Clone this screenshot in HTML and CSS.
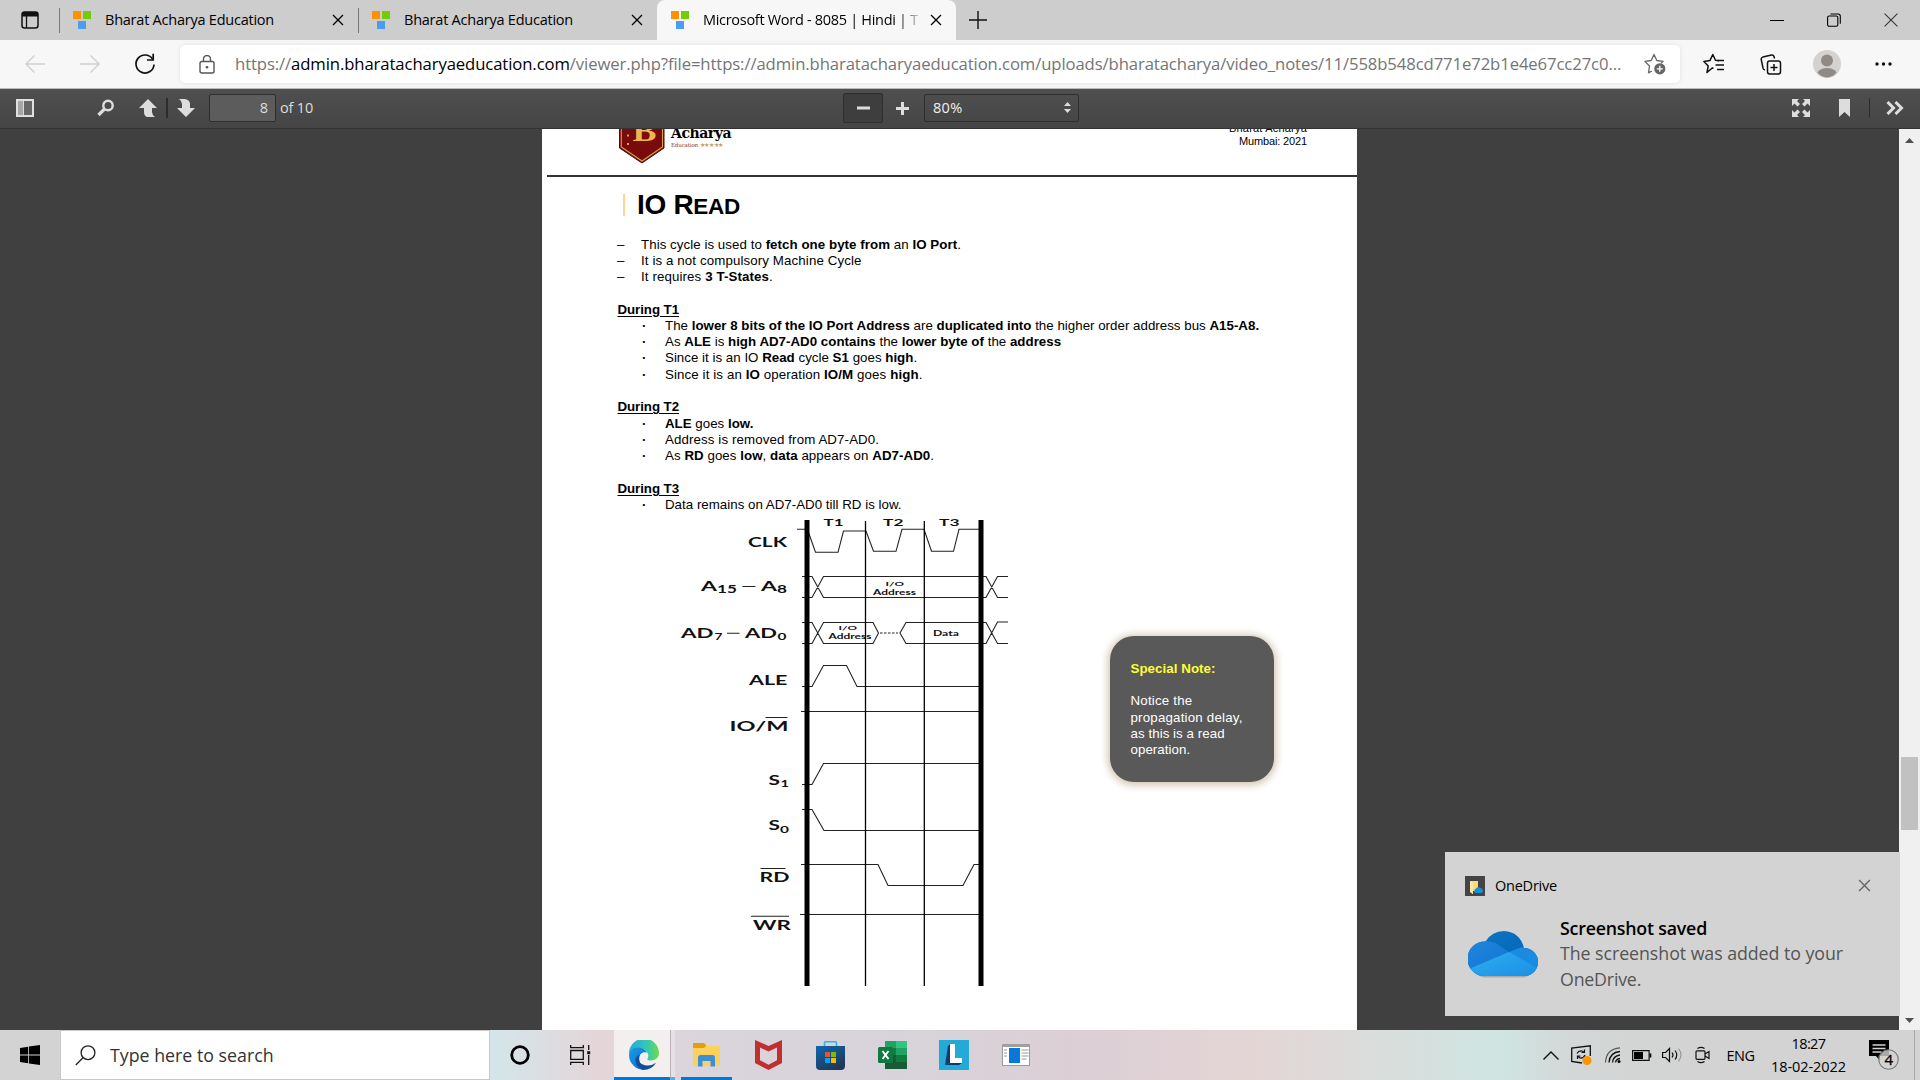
FILE: index.html
```html
<!DOCTYPE html>
<html lang="en">
<head>
<meta charset="utf-8">
<title>Microsoft Word - 8085 | Hindi</title>
<link rel="stylesheet" href="styles.css">
</head>
<body>
<svg class="defs" width="0" height="0">
  <symbol id="favicon" viewBox="0 0 18 18"><path fill="#ff9000" d="M0 0h8v8H0z"/><path fill="#72cc0a" d="M10 0h8v8h-8z"/><path fill="#4a9cf5" d="M5 10h8v8H5z"/></symbol>
  <symbol id="x" viewBox="0 0 12 12"><path d="M1 1l10 10M11 1L1 11" fill="none" stroke="currentColor" stroke-width="1.3"/></symbol>
</svg>

<header class="tabs">
  <div class="workspace"><svg width="18" height="18" viewBox="0 0 18 18"><rect x="1" y="1" width="16" height="16" rx="2.5" fill="none" stroke="#111" stroke-width="1.5"/><path d="M1 2.500Q1 1 3 1h12q2 0 2 1.500V5.500H1z" fill="#111"/><path d="M5.500 5v12" stroke="#111" stroke-width="1.300"/></svg></div>
  <div class="tab"><svg class="fav"><use href="#favicon"/></svg><span class="title">Bharat Acharya Education</span><svg class="close"><use href="#x"/></svg></div>
  <div class="tab"><svg class="fav"><use href="#favicon"/></svg><span class="title">Bharat Acharya Education</span><svg class="close"><use href="#x"/></svg></div>
  <div class="tab active"><svg class="fav"><use href="#favicon"/></svg><span class="title fade">Microsoft Word - 8085 | Hindi | T</span><svg class="close"><use href="#x"/></svg></div>
  <svg class="plus" width="18" height="18" viewBox="0 0 18 18"><path d="M9 0v18M0 9h18" stroke="#111" stroke-width="1.400"/></svg>
  <div class="winbtns">
    <span><svg width="14" height="14"><path d="M0 7.500h14" stroke="#000"/></svg></span>
    <span><svg width="14" height="14" viewBox="0 0 14 14"><rect x=".6" y="3" width="10.200" height="10.200" rx="1.500" fill="none" stroke="#000" stroke-width="1.100"/><path d="M3.500 1h7.500q2.300 0 2.300 2.300v7.500" fill="none" stroke="#000" stroke-width="1.100"/></svg></span>
    <span><svg width="14" height="14" viewBox="0 0 12 12"><path d="M.5.5l11 11M11.500.5l-11 11" stroke="#333" stroke-width=".9"/></svg></span>
  </div>
</header>

<nav class="nav">
  <div class="navbtn"><svg width="20" height="18" viewBox="0 0 20 18"><path d="M20 9H1M9.500.5L1 9l8.500 8.500" fill="none" stroke="#cfcfcf" stroke-width="1.400"/></svg></div>
  <div class="navbtn"><svg width="20" height="18" viewBox="0 0 20 18"><path d="M0 9h19M10.500.5L19 9l-8.500 8.500" fill="none" stroke="#cfcfcf" stroke-width="1.400"/></svg></div>
  <div class="navbtn"><svg width="22" height="22" viewBox="0 0 22 22"><path d="M18.500 6A9 9 0 1 0 20 11.500" fill="none" stroke="#111" stroke-width="1.700"/><path d="M19.200.8V7h-6.200" fill="none" stroke="#111" stroke-width="1.700"/></svg></div>
  <div class="field">
    <svg width="16" height="19" viewBox="0 0 16 19"><rect x="1" y="6.500" width="14" height="11.500" rx="1.800" fill="none" stroke="#555" stroke-width="1.400"/><path d="M4.500 6.500V4a3.500 3.500 0 0 1 7 0v2.500" fill="none" stroke="#555" stroke-width="1.400"/><circle cx="8" cy="12.200" r="1.300" fill="#555"/></svg>
    <span class="url">https://<b>admin.bharatacharyaeducation.com</b>/viewer.php?file=https://admin.bharatacharyaeducation.com/uploads/bharatacharya/video_notes/11/558b548cd771e72b1e4e67cc27c0...</span>
    <svg class="star" width="22" height="22" viewBox="0 0 22 22"><path d="M8 18l-3.500 1.800L5.500 13 .9 8.400l6.300-.9L10 1.500l2.800 6 6.300.9-2 2" fill="none" stroke="#666" stroke-width="1.300" stroke-linejoin="round"/><circle cx="15.800" cy="15.800" r="5.600" fill="#666"/><path d="M15.800 12.800v6M12.800 15.800h6" stroke="#fff" stroke-width="1.300"/></svg>
  </div>
  <div class="navright">
    <span><svg width="22" height="22" viewBox="0 0 22 22"><path d="M10.500 15.200L9.200 15 4 19.500 5.200 13 .9 8.500l6-.9L9.800 1.500l2.700 5.700 3.500.5" fill="none" stroke="#111" stroke-width="1.500" stroke-linejoin="round"/><path d="M14.500 7.500h6.500M12.500 12h8.500M14 16.500h7" stroke="#111" stroke-width="1.500"/></svg></span>
    <span><svg width="22" height="21" viewBox="0 0 22 21"><rect x="7.500" y="7" width="13" height="13" rx="2.200" fill="none" stroke="#111" stroke-width="1.500"/><path d="M14 10v7M10.500 13.500h7M5 15.800Q3.300 16 3 14L1.200 5.500Q1 3.600 2.800 3.100L11.500 1q2-.3 2.500 1.500l.5 2" fill="none" stroke="#111" stroke-width="1.500"/></svg></span>
    <span><svg width="28" height="28" viewBox="0 0 28 28"><circle cx="14" cy="14" r="14" fill="#d4d2d0"/><circle cx="14" cy="10.500" r="6" fill="#8f8a86"/><path d="M4.500 22.500Q7 18 14 18t9.500 4.500A13 13 0 0 1 14 27.500a13 13 0 0 1-9.500-5z" fill="#8f8a86"/></svg></span>
    <span><svg width="17" height="4"><g fill="#111"><circle cx="2" cy="2" r="1.700"/><circle cx="8.500" cy="2" r="1.700"/><circle cx="15" cy="2" r="1.700"/></g></svg></span>
  </div>
</nav>

<div class="pdfbar">
  <div class="left">
    <svg width="18" height="18" viewBox="0 0 18 18"><rect x="1" y="1" width="16" height="16" fill="#666" stroke="#e0e0e0" stroke-width="2"/><path d="M2 2h4v14H2z" fill="#a5a5a5"/><path d="M7.200 2v14" stroke="#e0e0e0" stroke-width="1.500"/></svg>
    <svg class="m-search" width="18" height="18" viewBox="0 0 18 18"><circle cx="11" cy="6.500" r="4.700" fill="none" stroke="#ddd" stroke-width="2.400"/><path d="M7.500 10L1.500 16" stroke="#ddd" stroke-width="3.200"/></svg>
    <svg class="m-up" width="18" height="18" viewBox="0 0 18 18"><path d="M9 0l9 9h-5v4q0 3 3 5H8q-3-1-3-5V9H0z" fill="#ddd"/></svg>
    <i class="sep"></i>
    <svg class="m-down" width="18" height="18" viewBox="0 0 18 18"><path d="M2 0h6q5 1 5 5v4h5l-9 9-9-9h5V5Q5 2 2 0z" fill="#ddd"/></svg>
    <div class="pageno">8</div>
    <span class="of">of 10</span>
  </div>
  <div class="mid">
    <div class="minus"><svg width="13" height="4"><path d="M0 2h13" stroke="#ddd" stroke-width="3"/></svg></div>
    <svg class="zin" width="13" height="13"><path d="M0 6.500h13M6.500 0v13" stroke="#ddd" stroke-width="3"/></svg>
    <div class="select"><span>80%</span><svg width="7" height="11" viewBox="0 0 7 11"><path d="M0 4l3.500-4L7 4zM0 7l3.500 4L7 7z" fill="#ddd"/></svg></div>
  </div>
  <div class="right">
    <svg width="18" height="18" viewBox="0 0 18 18" fill="#ddd"><path d="M0 0h7L5 2l3 3-2.500 2.500-3-3L0 7zM18 0h-7l2 2-3 3 2.500 2.500 3-3L18 7zM0 18h7l-2-2 3-3-2.500-2.500-3 3L0 11zM18 18h-7l2-2-3-3 2.500-2.500 3 3L18 11z"/></svg>
    <svg width="11" height="18" viewBox="0 0 11 18"><path d="M0 0h11v18l-5.500-5L0 18z" fill="#ddd"/></svg>
    <i class="sep"></i>
    <svg width="18" height="14" viewBox="0 0 18 14"><path d="M1.500 1l6 6-6 6M9.500 1l6 6-6 6" fill="none" stroke="#ddd" stroke-width="3"/></svg>
  </div>
</div>

<main class="viewer">
  <article class="page">
    <div class="dochead">
      <svg class="shield" width="46" height="35" viewBox="0 0 46 35"><path d="M.5-4v23L23 34l22-15V-4z" fill="#7a0b0b" stroke="#4a0d08"/><path d="M2.300-4v22L23 32l20.500-14V-4z" fill="none" stroke="#d9a050" stroke-width="1.100"/><text x="13.500" y="12" font-family="Liberation Serif" font-weight="bold" font-size="30" textLength="24" lengthAdjust="spacingAndGlyphs" fill="#f0b64e">B</text><path d="M8 5.500h2v2H8zM8 14h2v2H8z" fill="#d9a050"/></svg>
      <div class="brand"><span class="acharya">Acharya</span><span class="edu">Education <em>★★★★★</em></span></div>
      <div class="author"><span class="a1">Bharat Acharya</span><br><span>Mumbai: 2021</span></div>
    </div>
    <h1>IO R<small>EAD</small></h1>
    <ul class="dash">
      <li class="w1">This cycle is used to <b>fetch one byte from</b> an <b>IO Port</b>.</li>
      <li class="w2">It is a not compulsory Machine Cycle</li>
      <li class="w2">It requires <b>3 T-States</b>.</li>
    </ul>
    <h2>During T1</h2>
    <ul class="dots">
      <li>The <b>lower 8 bits of the IO Port Address</b> are <b>duplicated into</b> the higher order address bus <b>A15-A8.</b></li>
      <li>As <b>ALE</b> is <b>high AD7-AD0 contains</b> the <b>lower byte of</b> the <b>address</b></li>
      <li>Since it is an IO <b>Read</b> cycle <b>S1</b> goes <b>high</b>.</li>
      <li class="w2">Since it is an <b>IO</b> operation <b>IO/M</b> goes <b>high</b>.</li>
    </ul>
    <h2>During T2</h2>
    <ul class="dots">
      <li><b>ALE</b> goes <b>low.</b></li>
      <li class="w2">Address is removed from AD7-AD0.</li>
      <li class="w1">As <b>RD</b> goes <b>low</b>, <b>data</b> appears on <b>AD7-AD0</b>.</li>
    </ul>
    <h2>During T3</h2>
    <ul class="dots">
      <li>Data remains on AD7-AD0 till RD is low.</li>
    </ul>
    <div class="figure">
      <svg class="timing" width="360" height="475" viewBox="660 515 360 475">
        <g class="lbl">
          <text x="823.500" y="526" font-size="10" textLength="20" lengthAdjust="spacingAndGlyphs">T1</text>
          <text x="883" y="526" font-size="10" textLength="20.500" lengthAdjust="spacingAndGlyphs">T2</text>
          <text x="939" y="526" font-size="10" textLength="20.500" lengthAdjust="spacingAndGlyphs">T3</text>
          <text x="748" y="546.700" textLength="39" lengthAdjust="spacingAndGlyphs">CLK</text>
          <text x="701" y="591.300" textLength="16" lengthAdjust="spacingAndGlyphs">A</text><text x="717" y="592.500" font-size="10.500" textLength="20" lengthAdjust="spacingAndGlyphs">15</text>
          <text x="761" y="591.300" textLength="16" lengthAdjust="spacingAndGlyphs">A</text><text x="777" y="592.500" font-size="10.500" textLength="10" lengthAdjust="spacingAndGlyphs">8</text>
          <text x="681" y="637.500" textLength="32.500" lengthAdjust="spacingAndGlyphs">AD</text><text x="714.500" y="639.500" font-size="9" textLength="8" lengthAdjust="spacingAndGlyphs">7</text>
          <text x="745" y="637.500" textLength="32" lengthAdjust="spacingAndGlyphs">AD</text><text x="777.500" y="639.500" font-size="9" textLength="9" lengthAdjust="spacingAndGlyphs">0</text>
          <text x="749" y="685" textLength="38.500" lengthAdjust="spacingAndGlyphs">ALE</text>
          <text x="729.500" y="730.500" textLength="59" lengthAdjust="spacingAndGlyphs">IO/M</text>
          <text x="768.500" y="784.700" textLength="11.500" lengthAdjust="spacingAndGlyphs">S</text><text x="780.500" y="787" font-size="9" textLength="8.500" lengthAdjust="spacingAndGlyphs">1</text>
          <text x="768.500" y="830.200" textLength="11.500" lengthAdjust="spacingAndGlyphs">S</text><text x="780" y="832.500" font-size="9" textLength="9" lengthAdjust="spacingAndGlyphs">0</text>
          <text x="759.500" y="881.700" textLength="30" lengthAdjust="spacingAndGlyphs">RD</text>
          <text x="753" y="929.500" textLength="38" lengthAdjust="spacingAndGlyphs">WR</text>
          <text x="885.500" y="586" font-size="6.300" textLength="18.500" lengthAdjust="spacingAndGlyphs">I/O</text>
          <text x="873" y="594.700" font-size="6.600" textLength="43" lengthAdjust="spacingAndGlyphs">Address</text>
          <text x="838.500" y="630" font-size="6.300" textLength="18.500" lengthAdjust="spacingAndGlyphs">I/O</text>
          <text x="828.500" y="639" font-size="6.600" textLength="43" lengthAdjust="spacingAndGlyphs">Address</text>
          <text x="933" y="636.300" font-size="6.600" textLength="26" lengthAdjust="spacingAndGlyphs">Data</text>
        </g>
        <g fill="none" stroke="#222" stroke-width="1.100">
          <path d="M742.500 586.500h13M727 633.300h12.500M765.500 717.500h22M760.500 868.500h25M751 916.300h38"/>
          <path d="M797 529.300h8M808 531l7.500 21.300h22.500l5.500-21.300h22.500l7.500 20.300h22.500l6-22h22l7.500 22h22l5.500-22h20"/>
          <path d="M802 576.500h10l11.500 21H979M802 597.500h10l11.500-21H979M983 576.500h3l11.500 21H1008M983 597.500h3l11.500-21H1008"/>
          <path d="M802 622.500h10l11.500 21H873l5.500-10.500-5.500-10.500h-49.500l-11.500 21h-10M979 622.500h-73l-6 10.500 6 10.500h73M983 622.500h3l11.500 21H1008M983 643.500h3l11.500-21.500H1008"/>
          <path d="M880 633h18" stroke-dasharray="2.500 1.500"/>
          <path d="M802 686.500h10l11.500-21h23l10.500 21H979M801 711.500H979M802 784.500h10l11.500-21H979M802 809.500h10l12 21H979M801 864.500h77l10 21h75l11-21h5M800 914.500H979"/>
        </g>
        <path d="M865.500 521v465M924.300 521v465" stroke="#000" stroke-width="1.300"/>
        <path d="M807 520v466M981 520v466" stroke="#000" stroke-width="5"/>
      </svg>
      <aside class="note"><p class="nt">Special Note:</p><p><span class="w3">Notice the</span><br><span class="w3">propagation delay,</span><br><span>as this is a read</span><br><span>operation.</span></p></aside>
    </div>
  </article>
  <div class="scroll"><svg width="9" height="5"><path d="M4.500 0L9 5H0z" fill="#505050"/></svg><div class="thumb"></div><svg class="dn" width="9" height="5"><path d="M4.500 5L9 0H0z" fill="#505050"/></svg></div>
</main>

<section class="toast">
  <div class="tapp"><svg width="20" height="20" viewBox="0 0 20 20"><path fill="#444" d="M0 0h20v20H0z"/><path d="M5 5h8v10H8v3l-3-2z" fill="#ffd978"/><path d="M5 5l3 1.500V18l-3-2z" fill="#fbe7a6"/><path d="M10.500 17a2.200 2.200 0 0 1 0-4 3.400 3.400 0 0 1 5.500-.7 2.400 2.400 0 0 1 0 4.700z" fill="#1490df"/></svg><span>OneDrive</span><svg class="tx"><use href="#x"/></svg></div>
  <div class="tbody">
    <svg width="70" height="48" viewBox="0 0 70 48">
      <defs><linearGradient id="c1" x2="1" y2="1"><stop stop-color="#0a76c4"/><stop offset="1" stop-color="#0560b4"/></linearGradient><linearGradient id="c2" x2="1" y2="1"><stop stop-color="#1f86dc"/><stop offset="1" stop-color="#0f6fd0"/></linearGradient><linearGradient id="c3" x2="1" y2="1"><stop stop-color="#2bb0f0"/><stop offset="1" stop-color="#1c8de4"/></linearGradient><clipPath id="cl"><path d="M16 45a17 17 0 0 1 1.500-34.500Q24 0 36 0q16 1 20 17a14 14 0 0 1 0 28z"/></clipPath></defs>
      <path d="M16 46.500a16.500 16.500 0 0 1-13-12h64a14 14 0 0 1-11 12z" fill="#aaa"/>
      <g clip-path="url(#cl)"><path fill="url(#c1)" d="M0 0h70v45H0z"/><path d="M0 10q20-2 29 3l12 8 20 24H0z" fill="url(#c2)"/><path d="M41 21l10-4q6-2 19 0v30H40z" fill="#1b8be2"/><path d="M2 37.500L41 21l28 16v10H0z" fill="url(#c3)"/></g>
    </svg>
    <div class="tmsg"><b>Screenshot saved</b><span>The screenshot was added to your</span><span class="m2">OneDrive.</span></div>
  </div>
</section>

<footer class="taskbar">
  <div class="start"><svg width="20" height="20" viewBox="0 0 20 20"><path d="M0 3l8.200-1.200v7.700H0zM9 1.600L20 0v9.500H9zM0 10.400h8.200v7.800L0 17zM9 10.400h11V20L9 18.400z"/></svg></div>
  <div class="search"><svg width="21" height="21" viewBox="0 0 21 21"><circle cx="13" cy="7.700" r="6.900" fill="none" stroke="#222" stroke-width="1.300"/><path d="M8.300 12.500L.8 20" stroke="#222" stroke-width="1.300"/></svg><span>Type here to search</span></div>
  <div class="slot s60"><svg width="20" height="20"><circle cx="10" cy="10" r="8.300" fill="none" stroke="#000" stroke-width="2.800"/></svg></div>
  <div class="slot s64"><svg width="21" height="20" viewBox="0 0 21 20" fill="none" stroke="#111" stroke-width="1.300"><path d="M.7 5.500h12.600v8.800H.7zM.7 0v2.700h12.600V0M.7 20v-2.700h12.600V20M18.700 0v5M18.700 10v10"/><path d="M17.200 6.200h3v3h-3z" fill="#111" stroke="none"/></svg></div>
  <div class="slot edge"><svg width="30" height="30" viewBox="0 0 30 30"><defs><linearGradient id="e1"><stop stop-color="#2aa9dc"/><stop offset=".6" stop-color="#34c8b4"/><stop offset="1" stop-color="#6bdc4a"/></linearGradient><linearGradient id="e2" x2="1" y2="1"><stop stop-color="#1a9be4"/><stop offset="1" stop-color="#0b6bd0"/></linearGradient></defs><path d="M0 14A15 15 0 0 1 30 13q0 7-8 7.500-4 0-4-1.500 2-2 1-5Q16 7 9 8 3 9 0 14z" fill="url(#e1)"/><path d="M0 15Q1 7.500 9 7.500q6 0 9 5-6-1-7.500 4T15 29.900A15 15 0 0 1 0 15z" fill="url(#e2)"/><path d="M10.500 14.500q-3 9 5.500 10.800 6 1.200 11-2.500Q23 30 14 30 6 27 6.500 20q.5-4 4-5.500z" fill="#0d4f9e"/><path d="M15 12.500a4 4 0 0 1 3.500 5.500q-1 2 1.500 3-5 1.500-7.300-2T15 12.500z" fill="#f3efef"/></svg></div>
  <i class="split"></i>
  <div class="slot expl"><svg width="27" height="24" viewBox="0 0 27 24"><path d="M0 0h11l2 2v3H0z" fill="#dfa010"/><path d="M0 5h11l2-2h14v20H0z" fill="#ffd15c"/><path d="M5 23.500V14.500Q5 12 7.500 12h12q2.500 0 2.500 2.500v9h-4.500V18h-8v5.500z" fill="#3b90d8"/></svg></div>
  <div class="slot"><svg width="27" height="30" viewBox="0 0 27 30"><path d="M0 0l13.500 6L27 0v23l-13.500 7L0 23z" fill="#c12f2f"/><path d="M5 7.500l8.500 4 8.500-4v12.700l-8.500 4.500L5 20.200z" fill="#dbd3da"/></svg></div>
  <div class="slot"><svg width="29" height="29" viewBox="0 0 29 29"><defs><linearGradient id="st" x2=".6" y2="1"><stop stop-color="#0d68b0"/><stop offset="1" stop-color="#203858"/></linearGradient></defs><path d="M8.500 5.500V2q0-1.300 1.300-1.300h9.400q1.300 0 1.300 1.300v3.500" fill="none" stroke="#28b8f0" stroke-width="1.600"/><path d="M0 5h29v20q0 4-4 4H4q-4 0-4-4z" fill="url(#st)"/><path fill="#f25022" d="M9 11h5v5H9z"/><path fill="#7fba00" d="M15 11h5v5h-5z"/><path fill="#00a4ef" d="M9 17h5v5H9z"/><path fill="#ffb900" d="M15 17h5v5h-5z"/></svg></div>
  <div class="slot"><svg width="29" height="28" viewBox="0 0 29 28"><path fill="#21a366" d="M7 0h11v7H7z"/><path fill="#33c481" d="M18 0h11v7H18z"/><path fill="#107c41" d="M7 7h11v14H7z"/><path fill="#21a366" d="M18 7h11v7H18z"/><path fill="#107c41" d="M18 14h11v7H18z"/><path fill="#185c37" d="M7 14h11v7h11v7H7z"/><rect y="6" width="15" height="16" rx="1.500" fill="#0f7a40"/><path d="M4.500 10l6 8M10.500 10l-6 8" stroke="#fff" stroke-width="2"/></svg></div>
  <div class="slot"><svg width="30" height="30" viewBox="0 0 30 30"><path fill="#23aad9" d="M0 0h30v30H0z"/><path d="M6 25l5-2h12l-3 2z" fill="#12386a"/><path d="M11 4l-2 2-3 19 5-2z" fill="#12386a"/><path d="M11 4h5v14h7v5H11z" fill="#fff"/></svg></div>
  <div class="slot"><svg width="28" height="22" viewBox="0 0 28 22"><path d="M.5.5h27v21H.5z" fill="#fff" stroke="#9a9a9a"/><path fill="#a0a0a0" d="M0 0h28v3H0z"/><path fill="#0a78d8" d="M7 4h11v15H7z"/><path d="M2 6h3M2 9h3M2 12h3M19.500 6h7M19.500 9h7M19.500 12h7M19.500 15h5" stroke="#999"/></svg></div>
  <div class="tray">
    <svg width="16" height="9" viewBox="0 0 16 9"><path d="M.5 8.500L8 1l7.500 7.500" fill="none" stroke="#111" stroke-width="1.400"/></svg>
    <svg class="m1" width="21" height="20" viewBox="0 0 21 20"><path d="M11 18L.7 16.500V3L19.300.8V11" fill="none" stroke="#111" stroke-width="1.300"/><path d="M6 8.500Q7.500 5.500 11 6l2.500 1.500M13.500 4.500v3h-3M14 10q-1.500 3.500-5 3l-2.500-2M6.500 14v-3h3" fill="none" stroke="#111" stroke-width="1.200"/><circle cx="16" cy="15.500" r="4.500" fill="#ff9500"/></svg>
    <svg class="m2" width="17" height="16" viewBox="0 0 17 16"><path d="M1.500 15.500Q2 2 16 .8" fill="none" stroke="#555" stroke-width="1.200"/><path d="M5 15.500Q5.500 5.500 16 4.500M8.500 15.500Q9 9 16 8M11.500 15.500q.5-3.500 4.500-4" fill="none" stroke="#111" stroke-width="1.300"/><circle cx="15" cy="14.500" r="1.500"/></svg>
    <svg class="m3" width="20" height="11" viewBox="0 0 20 11"><path d="M.6.600h16.500v9.800H.600z" fill="none" stroke="#111" stroke-width="1.200"/><path d="M2 2h9v7H2zM17.500 3.500h1.800v4h-1.800z"/></svg>
    <svg class="m4" width="21" height="16" viewBox="0 0 21 16" fill="none" stroke="#111" stroke-width="1.200"><path d="M.6 5.500h3L7.500 1.500v13L3.600 10.500h-3zM10 5.500q2 2.500 0 5M13 3.500q3.500 4.500 0 9"/><path d="M16.500 1.500q5 6.500 0 13" stroke="#999"/></svg>
    <svg class="m5" width="16" height="18" viewBox="0 0 16 18" fill="none" stroke="#111" stroke-width="1.200"><rect x="1" y="4.800" width="9" height="8.500" rx="1"/><path d="M10 8l4-2.500v7L10 10M2.500 2.500Q6 .2 9.500 2.500M2.500 15.500Q6 17.800 9.500 15.500"/></svg>
    <span class="eng">ENG</span>
    <div class="clock"><span class="time">18:27</span><span>18-02-2022</span></div>
    <svg class="m6" width="31" height="31" viewBox="0 0 31 31"><path d="M0 0h20v16h-9v5l-4-5H0z"/><path d="M3.500 5h13M3.500 8.500h13M3.500 12h9" stroke="#d3d3d3" stroke-width="1.300"/><circle cx="19.500" cy="19.500" r="9.800" fill="#d3d3d3" fill-opacity=".8" stroke="#777" stroke-width="1.100"/><text x="15.500" y="25" font-family="Open Sans" font-size="15" fill="#000" stroke="#000" stroke-width=".3">4</text></svg>
    <i class="peek"></i>
  </div>
</footer>
</body>
</html>
```
FILE: styles.css
```css
* { box-sizing: border-box; }
body { margin: 0; width: 1920px; height: 1080px; overflow: hidden; display: flex; flex-direction: column; font-family: "Open Sans", "Noto Sans", sans-serif; color: #000; }
svg { display: block; flex: none; }
.defs { position: absolute; }
span { white-space: nowrap; }

/* tab strip */
.tabs { height: 40px; flex: none; display: flex; align-items: center; background: #cdcdcd; font-size: 14.5px; }
.workspace { width: 59px; display: flex; padding-left: 21px; }
.tab { width: 299px; height: 40px; display: flex; align-items: center; padding: 0 14px 0 14px; position: relative; }
.tab:not(.active)::before { content: ""; position: absolute; left: 0; top: 8px; height: 25px; width: 1px; background: #777; }
.tab.active { background: #f7f7f7; border-radius: 8px 8px 0 0; }
.fav { width: 18px; height: 18px; margin-right: 14px; }
.title { flex: 1; overflow: hidden; line-height: 20px; letter-spacing: -.233px; }
.fade { flex: none; width: 215px; letter-spacing: -.3px; -webkit-mask-image: linear-gradient(90deg, #000 195px, rgba(0,0,0,.2) 215px); mask-image: linear-gradient(90deg, #000 195px, rgba(0,0,0,.2) 215px); }
.close { width: 12px; height: 12px; margin-left: auto; }
.plus { margin-left: 13px; }
.winbtns { margin-left: auto; display: flex; }
.winbtns span { width: 57.3px; display: flex; justify-content: center; }

/* address row */
.nav { height: 48px; flex: none; display: flex; align-items: center; background: #f7f7f7; padding-left: 7.5px; }
.navbtn { width: 55px; display: flex; justify-content: center; }
.field { margin-left: 7.5px; width: 1500px; height: 38px; background: #fff; border-radius: 5px; box-shadow: 0 0 4px rgba(0,0,0,.1); display: flex; align-items: center; padding: 0 14px 0 19px; }
.url { margin-left: 20px; font-size: 16.7px; letter-spacing: -.106px; color: #757575; line-height: 24px; }
.url b { font-weight: 400; color: #000; }
.star { margin-left: auto; }
.navright { display: flex; margin-left: 6px; }
.navright span { width: 56.5px; display: flex; justify-content: center; align-items: center; }

/* document toolbar */
.pdfbar { height: 41px; flex: none; border-top: 1px solid #bbb; border-bottom: 1px solid #333; background: linear-gradient(#4f4f4f, #454545); display: grid; grid-template-columns: 843px 1fr auto; align-items: center; color: #ddd; font-size: 14.5px; padding-bottom: 1px; }
.left, .mid, .right { display: flex; align-items: center; }
.left { padding-left: 16px; }
.m-search { margin-left: 63px; }
.m-up { margin-left: 24px; }
.sep { width: 2px; height: 20px; background: #2c2c2c; }
.left .sep { margin-left: 9px; }
.m-down { margin-left: 9px; }
.pageno { margin-left: 14px; width: 67px; height: 28px; border: 1px solid #2e2e2e; border-radius: 2px; background: #5c5c5c; text-align: right; padding-right: 7px; line-height: 25px; }
.of { margin-left: 4px; line-height: 20px; margin-top: -1px; letter-spacing: -.19px; }
.minus { width: 40px; height: 30px; border: 1px solid #2e2e2e; border-radius: 2px; background: #3e3e3e; display: flex; align-items: center; justify-content: center; }
.zin { margin-left: 12.500px; }
.select { margin-left: 15.500px; width: 155px; height: 28px; border: 1px solid #2e2e2e; border-radius: 2px; display: flex; align-items: center; justify-content: space-between; padding: 0 7px 1px 8px; color: #f0f0f0; letter-spacing: .3px; }
.right { padding-right: 16px; }
.right svg:nth-child(2) { margin-left: 29px; }
.right .sep { margin: 0 16px 0 19px; width: 1px; }

/* viewer */
.viewer { flex: 1; min-height: 0; background: #404040; display: flex; justify-content: space-between; padding-left: 542px; }
.page { width: 815px; height: 901px; background: #fff; overflow: hidden; font-family: "Liberation Sans", Arial, sans-serif; font-size: 13.3px; line-height: 16.28px; letter-spacing: .02px; }
.dochead { height: 48px; margin-left: 5px; border-bottom: 2px solid #333; padding-left: 72px; padding-right: 50px; display: flex; }
.brand { margin-left: 6px; display: flex; flex-direction: column; font-family: "DejaVu Serif", serif; font-weight: bold; }
.acharya { font-size: 14px; line-height: 18px; margin-top: -5px; height: 18px; letter-spacing: -.46px; }
.edu { font-size: 5.5px; line-height: 6px; color: #7a3030; font-weight: 400; letter-spacing: -.14px; }
.edu em { color: #c99a6a; font-style: normal; font-size: 6px; letter-spacing: -.3px; }
.author { margin-left: auto; text-align: right; font-size: 11px; line-height: 13px; margin-top: -7px; letter-spacing: -.14px; }
.a1 { letter-spacing: .2px; }
h1 { margin: 16.500px 0 0 81px; height: 22px; line-height: 22px; border-left: 2px solid #ffd596; padding-left: 12px; font-size: 28px; letter-spacing: -.3px; }
h1 small { font-size: 22.5px; }
ul { list-style: none; margin: 0; padding: 0; }
.w1 { letter-spacing: .055px; }
.w2 { letter-spacing: .11px; }
.w3 { letter-spacing: .2px; }
.dash { margin-top: 21px; padding-left: 75px; }
.dash li::before { content: "–"; display: inline-block; width: 24px; }
.dots { padding-left: 100px; }
.dots li::before { content: "·"; display: inline-block; width: 23px; font-weight: bold; }
h2 { font-size: 13.3px; line-height: 16.28px; margin: 16.280px 0 0 75.500px; letter-spacing: -.06px; text-decoration: underline; text-underline-offset: 2px; }
.figure { display: flex; align-items: flex-start; padding-left: 118px; }
.timing { margin-top: 1.700px; }
.timing .lbl { font-family: Lato, "Open Sans", sans-serif; font-weight: 700; font-size: 13.3px; fill: #111; }
.note { margin: 122.500px 0 0 90px; width: 164px; height: 146px; background: #595959; border-radius: 24px; box-shadow: 0 1px 7px 3px #d9cdbc; color: #fff; padding: 25px 0 0 20.500px; letter-spacing: .06px; }
.note p { margin: 0; }
.nt { color: #ffff33; font-weight: bold; padding-bottom: 16.280px; }

.scroll { width: 21px; background: #f0f0f0; display: flex; flex-direction: column; align-items: center; padding: 9px 0 7px; }
.thumb { width: 17px; height: 73px; background: #c1c1c1; margin-top: 614px; }
.dn { margin-top: auto; }

/* notification */
.toast { position: absolute; left: 1445px; top: 852px; width: 455px; height: 164px; background: #d3d3d3; padding: 24px 29px 0 20px; }
.tapp { display: flex; align-items: center; height: 20px; font-size: 14.5px; gap: 10px; letter-spacing: -.23px; }
.tapp span { margin-top: -2px; }
.tx { width: 13px; height: 13px; margin: -2px 0 0 auto; color: #666; }
.tbody { display: flex; margin-top: 24px; padding-left: 3px; align-items: flex-start; }
.tbody svg { margin-top: 11px; }
.tmsg { margin: -4px 0 0 22px; display: flex; flex-direction: column; font-size: 17.800px; line-height: 25.300px; color: #555; letter-spacing: -.056px; }
.tmsg b { font-weight: 600; color: #000; letter-spacing: -.207px; }
.m2 { letter-spacing: -.2px; }

/* taskbar */
.taskbar { height: 50px; flex: none; display: flex; background: linear-gradient(90deg, #d3d3d3 60px, #d3e6ea 490px, #e4d5d8 600px, #dad5dc 700px, #d8d3da 900px, #dccfd5 1090px, #e4d5d5 1250px, #cfe5e2 1500px, #d3d7d7 1570px, #d3d3d3 1700px); }
.start { width: 60px; display: flex; align-items: center; justify-content: center; }
.search { width: 430px; height: 50px; background: #fff; border: 1px solid #c8c8c8; display: flex; align-items: center; padding-left: 14px; gap: 14px; font-size: 17.800px; color: #333; }
.slot { width: 62px; display: flex; align-items: center; justify-content: center; }
.s60 { width: 60px; }
.s64 { width: 64px; padding-right: 3px; }
.edge { background: #f3efef; border-bottom: 3px solid #0078d7; width: 56px; padding: 3px 0 0 3px; }
.split { width: 5px; border-left: 1px solid #b8b2b8; border-bottom: 3px solid #5aa8e6; background: #e6e1e5; }
.expl { border-bottom: 3px solid #0078d7; width: 51px; margin: 0 5px 0 6px; padding: 3px 1px 0 0; }
.tray { margin-left: auto; display: flex; align-items: center; font-size: 14.500px; }
.m1 { margin-left: 12px; }
.tray .m2 { margin-left: 12px; }
.m3 { margin-left: 11px; }
.m4 { margin-left: 10px; }
.m5 { margin-left: 12px; }
.eng { margin-left: 15px; letter-spacing: -.5px; }
.clock { margin-left: 16.500px; display: flex; flex-direction: column; align-items: center; line-height: 23px; width: 75px; letter-spacing: -.067px; }
.time { letter-spacing: -.6px; }
.m6 { margin-left: 23px; }
.peek { width: 1px; height: 50px; background: #aaa; margin: 0 5px 0 14px; }
```
